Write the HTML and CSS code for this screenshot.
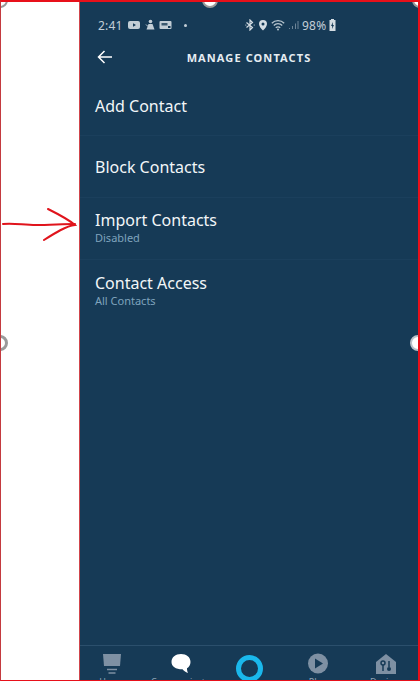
FILE: index.html
```html
<!DOCTYPE html>
<html lang="en">
<head>
<meta charset="utf-8">
<title>Manage Contacts</title>
<link rel="stylesheet" href="styles.css">
</head>
<body>
<div class="frame">
  <div class="margin"></div>
  <main class="phone">
    <div class="status">
      <div class="status-left">
        <span class="time">2:41</span>
        <svg class="ico" width="14" height="10" viewBox="0 0 14 10"><rect x="1" y="1" width="12" height="8" rx="2" fill="#c3ced6"/><path d="M6 3.200v3.600L9 5z" fill="#163a56"/></svg>
        <svg class="ico" width="10" height="12" viewBox="0 0 10 12"><circle cx="5.500" cy="2.500" r="1.800" fill="#c3ced6"/><path d="M3.500 5h4l2 5.500H1.500z" fill="#c3ced6"/><path d="M1 5.500l2 2" stroke="#c3ced6"/></svg>
        <svg class="ico" width="13" height="10" viewBox="0 0 13 10"><rect x="0.500" y="1" width="12" height="8" rx="1" fill="#c3ced6"/><rect x="2.500" y="3" width="6" height="2.500" fill="#3c5a70"/><rect x="9" y="6" width="2.500" height="2" fill="#163a56"/></svg>
        <span class="dot"></span>
      </div>
      <div class="status-right">
        <svg class="ico" width="10" height="12" viewBox="0 0 10 12" fill="none" stroke="#d5dde3" stroke-width="1.200"><path d="M1.500 3.500l6 5L5 11V1l2.500 2.500-6 5"/><circle cx="0.800" cy="6" r="0.600" fill="#d5dde3" stroke="none"/><circle cx="9.200" cy="6" r="0.600" fill="#d5dde3" stroke="none"/></svg>
        <svg class="ico" width="10" height="12" viewBox="0 0 10 12"><path fill-rule="evenodd" d="M5 1a4 4 0 0 1 4 4c0 2.500-2.500 5-4 6.500C3.500 10 1 7.500 1 5a4 4 0 0 1 4-4zm0 2.500a1.500 1.500 0 1 0 0 3 1.500 1.500 0 0 0 0-3z" fill="#d5dde3"/></svg>
        <svg class="ico" width="14" height="12" viewBox="0 0 14 12" fill="none" stroke="#b9c6cf" stroke-width="1.300"><path d="M.8 4.200a8.800 8.800 0 0 1 12.400 0M2.800 6.500a5.800 5.800 0 0 1 8.400 0M4.800 8.800a3 3 0 0 1 4.400 0"/><circle cx="7" cy="10.500" r="1" fill="#b9c6cf" stroke="none"/></svg>
        <svg class="ico signal" width="11" height="10" viewBox="0 0 11 10"><path d="M1 8h1v1H1zM4 6h1v3H4zM7 3.500h1V9H7zM9.500 1h1v8h-1z" fill="#6d8497"/></svg>
        <span class="time">98%</span>
        <svg class="ico" width="7" height="12" viewBox="0 0 7 12"><path fill-rule="evenodd" d="M2 0h3v1h1.500v11H.5V1H2zM4 3L2 7h1.200L3 10l2-4H3.800z" fill="#d5dde3"/></svg>
      </div>
    </div>
    <header class="title-bar">
      <svg class="back" width="16" height="14" viewBox="0 0 16 14" fill="none" stroke="#fff" stroke-width="1.500"><path d="M15 7H1.500M7.500 1L1.500 7l6 6"/></svg>
      <h1 class="title">MANAGE CONTACTS</h1>
    </header>
    <ul class="list">
      <li class="row row-add"><span class="label">Add Contact</span></li>
      <li class="row row-block"><span class="label">Block Contacts</span></li>
      <li class="row row-import"><span class="label">Import Contacts</span><span class="sub">Disabled</span></li>
      <li class="row row-access"><span class="label">Contact Access</span><span class="sub">All Contacts</span></li>
    </ul>
    <nav class="tabs">
      <div class="tab">
        <svg width="20" height="22" viewBox="0 0 20 22"><path d="M1 1h18l-1 12H2z" fill="#7e90a3"/><path d="M5 16.500h10M6.500 20h7" stroke="#7e90a3" stroke-width="1.500"/></svg>
        <span class="tab-label">Home</span>
      </div>
      <div class="tab">
        <svg width="20" height="22" viewBox="0 0 20 22"><path d="M10 1c5.500 0 9.500 3 9.500 8 0 3-1.500 5.200-3.500 6.300 0 1.500.2 3.200 1 4.700-2.500-.8-4.500-2.200-5.500-3.700C4.500 16.300.5 13.500.5 9 .5 4 4.500 1 10 1z" fill="#fff"/></svg>
        <span class="tab-label">Communicate</span>
      </div>
      <div class="tab">
        <span class="alexa"></span>
      </div>
      <div class="tab">
        <svg width="20" height="22" viewBox="0 0 20 22"><circle cx="10" cy="10.500" r="10" fill="#7e90a3"/><path d="M7 5.500v10l8-5z" fill="#163a56"/></svg>
        <span class="tab-label">Play</span>
      </div>
      <div class="tab">
        <svg width="20" height="22" viewBox="0 0 20 22"><path d="M10 1l10 8v12H0V9z" fill="#7e90a3"/><path d="M7 18v-6" stroke="#163a56" stroke-width="1.500"/><circle cx="7" cy="10" r="2" fill="none" stroke="#163a56" stroke-width="1.500"/><path d="M13 8v6" stroke="#163a56" stroke-width="1.500"/><circle cx="13" cy="16" r="2" fill="#163a56"/></svg>
        <span class="tab-label">Devices</span>
      </div>
    </nav>
  </main>
  <svg class="arrow" width="76" height="46" viewBox="0 0 76 46" fill="none" stroke="#e0141c" stroke-width="2" stroke-linecap="round"><path d="M2 17c12-1 20 1 33 1 13 0 27-1 39-1"/><path d="M47 2c10 5 20 10 27 16-9 1-20 8-31 15"/></svg>
  <span class="handle handle-top"></span>
  <span class="handle handle-left"></span>
  <span class="handle handle-right"></span>
  <span class="handle handle-corner"></span>
  <span class="handle handle-corner-left"></span>
</div>
</body>
</html>
```

FILE: styles.css
```css
* { box-sizing: border-box; }

html, body {
  margin: 0;
  padding: 0;
  height: 100%;
  overflow: hidden;
}

body {
  font-family: "Noto Sans", "Open Sans", sans-serif;
  background: #fff;
}

.frame {
  position: relative;
  display: flex;
  width: 420px;
  height: 681px;
  border-top: 2px solid #e8101a;
  border-left: 1px solid #c43a3f;
  border-right: 2px solid #e8101a;
  border-bottom: 1px solid #e8101a;
  overflow: hidden;
}

.margin {
  width: 79px;
  flex: none;
  background: #fff;
  border-right: 1px solid #d0454c;
}

.phone {
  flex: 1;
  display: flex;
  flex-direction: column;
  background: #163a56;
  color: #fff;
}

.status {
  display: flex;
  align-items: center;
  height: 22px;
  margin-top: 12px;
  padding: 0 0 0 18px;
  color: #c3ced6;
}

.status-left {
  display: flex;
  align-items: center;
  gap: 4px;
  width: 147px;
}

.status-right {
  display: flex;
  align-items: center;
  gap: 3px;
}

.time {
  font-size: 12px;
  letter-spacing: 0.2px;
}

.ico { flex: none; display: block; }

.dot {
  width: 3px;
  height: 3px;
  margin-left: 8px;
  border-radius: 50%;
  background: #c3ced6;
}

.title-bar {
  position: relative;
  display: flex;
  align-items: center;
  justify-content: center;
  height: 28px;
  margin-top: 7px;
}

.back {
  position: absolute;
  left: 17px;
  top: 7px;
}

.title {
  margin: 0;
  font-size: 11px;
  font-weight: 700;
  letter-spacing: 1.1px;
  color: #e6edf2;
}

.list {
  list-style: none;
  margin: 8px 0 0;
  padding: 0;
  flex: 1;
}

.row {
  display: flex;
  flex-direction: column;
  padding-left: 15px;
  border-bottom: 1px solid #1b3f5c;
}

.row-add { height: 57px; padding-top: 16px; }
.row-block { height: 62px; padding-top: 20px; }
.row-import { height: 62px; padding-top: 11px; }
.row-access { border-bottom: 0; padding-top: 12px; }

.label {
  font-size: 16px;
  line-height: 22px;
  color: #f2f6f8;
}

.sub {
  font-size: 11px;
  line-height: 13px;
  color: #7fa3bd;
}

.tabs {
  display: flex;
  justify-content: space-between;
  height: 35px;
  flex: none;
  padding: 7px 22px 0;
  border-top: 1px solid #2b4f6c;
  overflow: hidden;
}

.tab {
  display: flex;
  flex-direction: column;
  align-items: center;
  width: 20px;
  gap: 2px;
}

.tab svg { flex: none; }

.tab-label {
  font-size: 9px;
  line-height: 10px;
  color: #8fa2b3;
  white-space: nowrap;
}

.alexa {
  display: block;
  width: 27px;
  height: 27px;
  flex: none;
  margin-top: 2px;
  border-radius: 50%;
  border: 5px solid #1ab8ec;
}

.arrow {
  position: absolute;
  left: 0;
  top: 205px;
}

.handle {
  position: absolute;
  width: 16px;
  height: 16px;
  border-radius: 50%;
  background: #fff;
  border: 2px solid #9a9a9a;
}

.handle-top { left: 201px; top: -10px; }
.handle-left { left: -9px; top: 333px; border-width: 3px; }
.handle-right { left: 409px; top: 333px; border-color: #b9c2c9; }
.handle-corner { left: 411px; top: -10px; }
.handle-corner-left { left: -9px; top: -10px; }
```
